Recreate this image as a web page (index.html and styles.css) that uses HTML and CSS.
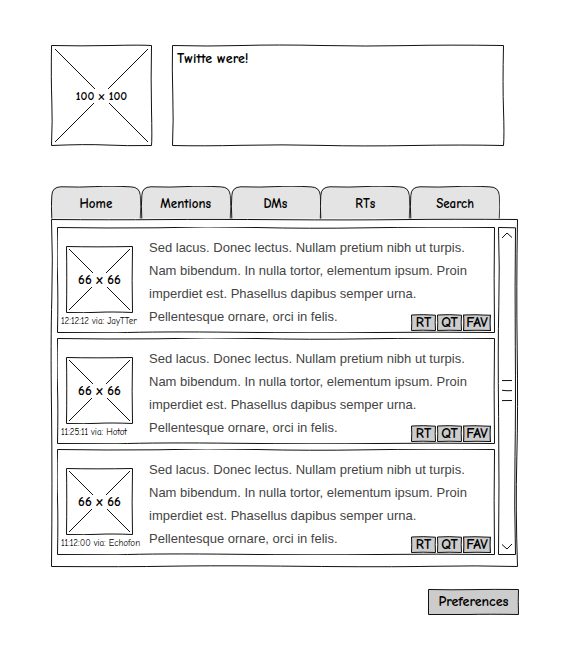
FILE: index.html
```
<!DOCTYPE html>
<html lang="en">
<head>
<meta charset="utf-8">
<meta name="viewport" content="width=device-width, initial-scale=1">
<title>Twitter client</title>
<link rel="stylesheet" href="styles.css">
</head>
<body>
<svg class="defs" aria-hidden="true">
  <symbol id="card" viewBox="0 0 438 106" preserveAspectRatio="none">
    <path d="M.5 .5Q50 1.300 100 .8Q150 -.8 200 .5T310 .8T437.500 .5Q436.800 50 437.500 105.500Q380 104.800 320 105.500T180 105.300T60 105.800L.5 105.500Q1.200 70 .5 50T.5 .5Z"/>
  </symbol>
  <symbol id="photo" viewBox="0 0 67 67" preserveAspectRatio="none">
    <path d="M.5 .5Q30 1.200 66.500 .5Q65.800 35 66.500 66.500Q45 65.600 32 66.300T.5 66.500Q1 30 .5 .5ZM3 3L64 64M64 3L3 64"/>
  </symbol>
  <symbol id="tab" viewBox="0 0 90 34" preserveAspectRatio="none">
    <path d="M.8 33.500Q0 20 .8 10Q1 1 10 .8Q30 1.500 45 .6T80 .9Q89 1 89.600 10Q90.200 22 89.500 33.500"/>
  </symbol>
  <symbol id="key" viewBox="0 0 25 17" preserveAspectRatio="none">
    <path d="M.5 1Q12 .2 24.500 1.200Q23.900 8 24.500 16.500Q12 15.900 .5 16.500Q1 8 .5 1Z"/>
  </symbol>
</svg>
<main class="app">
  <header class="compose">
    <div class="photo photo-large">
      <svg class="frame" viewBox="0 0 101 101" preserveAspectRatio="none" aria-hidden="true"><path d="M.5 .5Q30 1.200 60 .5T100.500 .5Q99.800 35 100.500 65T100.500 100.500Q75 101 55 100T.5 100.500Q1.600 75 .8 55T.5 .5ZM4 4L97 97M97 4L4 97"/></svg>
      <span class="size">100 x 100</span>
    </div>
    <div class="message">
      <textarea aria-label="Message">Twitte were!</textarea>
      <svg class="frame" viewBox="0 0 332 101" preserveAspectRatio="none" aria-hidden="true"><path d="M.5 .5Q35 1.500 70 .5T150 .5T235 .6T331.500 .5Q330.600 40 331.500 65T331.500 100.500Q290 99.600 240 100.500T150 100.400T70 100.300T.5 100.500Q1.600 75 .8 50T.5 .5Z"/></svg>
    </div>
  </header>

  <div class="tabs" role="tablist">
    <button class="tab" role="tab" aria-selected="true"><svg class="frame"><use href="#tab"/></svg><span>Home</span></button>
    <button class="tab" role="tab"><svg class="frame"><use href="#tab"/></svg><span>Mentions</span></button>
    <button class="tab" role="tab"><svg class="frame"><use href="#tab"/></svg><span>DMs</span></button>
    <button class="tab" role="tab"><svg class="frame"><use href="#tab"/></svg><span>RTs</span></button>
    <button class="tab" role="tab"><svg class="frame"><use href="#tab"/></svg><span>Search</span></button>
  </div>

  <section class="panel" role="tabpanel">
    <svg class="frame" viewBox="0 0 467 348" preserveAspectRatio="none" aria-hidden="true"><path d="M.5 .5Q60 1 110 .6T230 .7T350 .6T466.500 .5Q465.300 70 466.200 130T465.800 240T466.500 347.500Q425 346.400 380 347.300T250 347.300T120 347.200T.5 347.500Q1.400 260 .5 190T.8 80T.5 .5Z"/></svg>
    <div class="feed">
      <article class="card">
        <svg class="frame"><use href="#card"/></svg>
        <div class="source">
          <div class="photo"><svg class="frame"><use href="#photo"/></svg><span class="size">66 x 66</span></div>
          <p class="meta">12:12:12 via: JayTTer</p>
        </div>
        <p class="text">Sed lacus. Donec lectus. Nullam pretium nibh ut turpis. Nam bibendum. In nulla tortor, elementum ipsum. Proin imperdiet est. Phasellus dapibus semper urna. Pellentesque ornare, orci in felis.</p>
        <div class="actions">
          <button class="key"><svg class="frame"><use href="#key"/></svg><span>RT</span></button>
          <button class="key"><svg class="frame"><use href="#key"/></svg><span>QT</span></button>
          <button class="key key-wide"><svg class="frame"><use href="#key"/></svg><span>FAV</span></button>
        </div>
      </article>
      <article class="card">
        <svg class="frame"><use href="#card"/></svg>
        <div class="source">
          <div class="photo"><svg class="frame"><use href="#photo"/></svg><span class="size">66 x 66</span></div>
          <p class="meta">11:25:11 via: Hotot</p>
        </div>
        <p class="text">Sed lacus. Donec lectus. Nullam pretium nibh ut turpis. Nam bibendum. In nulla tortor, elementum ipsum. Proin imperdiet est. Phasellus dapibus semper urna. Pellentesque ornare, orci in felis.</p>
        <div class="actions">
          <button class="key"><svg class="frame"><use href="#key"/></svg><span>RT</span></button>
          <button class="key"><svg class="frame"><use href="#key"/></svg><span>QT</span></button>
          <button class="key key-wide"><svg class="frame"><use href="#key"/></svg><span>FAV</span></button>
        </div>
      </article>
      <article class="card">
        <svg class="frame"><use href="#card"/></svg>
        <div class="source">
          <div class="photo"><svg class="frame"><use href="#photo"/></svg><span class="size">66 x 66</span></div>
          <p class="meta">11:12:00 via: Echofon</p>
        </div>
        <p class="text">Sed lacus. Donec lectus. Nullam pretium nibh ut turpis. Nam bibendum. In nulla tortor, elementum ipsum. Proin imperdiet est. Phasellus dapibus semper urna. Pellentesque ornare, orci in felis.</p>
        <div class="actions">
          <button class="key"><svg class="frame"><use href="#key"/></svg><span>RT</span></button>
          <button class="key"><svg class="frame"><use href="#key"/></svg><span>QT</span></button>
          <button class="key key-wide"><svg class="frame"><use href="#key"/></svg><span>FAV</span></button>
        </div>
      </article>
    </div>
    <div class="scroll">
      <svg class="frame" viewBox="0 0 18 329" preserveAspectRatio="none" aria-hidden="true"><path d="M.5 .5L17.500 .8Q16.800 60 17.300 120T17 230T17.500 328.500L.5 328.500Q1.400 260 .6 190T.8 80T.5 .5Z"/></svg>
      <button class="arrow" aria-label="Scroll up"><svg width="12" height="7" viewBox="0 0 12 7"><path d="M1 6L6 1L11 5.500"/></svg></button>
      <svg class="grip" width="12" height="22" viewBox="0 0 12 22" aria-hidden="true"><path d="M1 .6L11 .5M1 10.300Q6 11 11 10.600M1 20.600L11 20.500"/></svg>
      <button class="arrow" aria-label="Scroll down"><svg width="12" height="7" viewBox="0 0 12 7"><path d="M1 1.500L6 6L11 1"/></svg></button>
    </div>
  </section>

  <footer class="footer">
    <button class="prefs"><svg class="frame" viewBox="0 0 91 26" preserveAspectRatio="none" aria-hidden="true"><path d="M.5 .5Q25 1 45 .6T90.500 .5Q90 12 90.500 25.500Q60 25 40 25.500L.5 25.500Z"/></svg><span>Preferences</span></button>
  </footer>
</main>
</body>
</html>
```
FILE: styles.css
```
* { box-sizing: border-box; }

body {
  margin: 0;
  background: #fff;
  color: #000;
  font: bold 13px/16px "Comic Sans MS", "Comic Neue", "Noto Sans", sans-serif;
}

p { margin: 0; }

button {
  position: relative;
  padding: 0;
  border: 0;
  background: none;
  color: inherit;
  font: inherit;
}

svg {
  display: block;
  fill: none;
  stroke: #111;
  stroke-width: 1;
}

.defs {
  position: absolute;
  width: 0;
  height: 0;
}

/* Hand-drawn outline that stretches over its box */
.frame {
  position: absolute;
  inset: 0;
  width: 100%;
  height: 100%;
  overflow: visible;
  pointer-events: none;
}

button span { position: relative; }

.app { padding: 45px 44px 24px 51px; }

.compose {
  display: flex;
  gap: 20px;
  margin-right: 14px;
}

.photo {
  position: relative;
  display: grid;
  place-items: center;
  width: 67px;
  height: 67px;
}

.photo-large {
  flex: none;
  width: 101px;
  height: 101px;
  font-size: 12px;
}

.size {
  position: relative;
  background: #fff;
  line-height: 14px;
  white-space: nowrap;
}

.message {
  position: relative;
  flex: 1;
  display: flex;
}

.message textarea {
  width: 100%;
  padding: 6px 5px;
  border: 0;
  outline: 0;
  resize: none;
  background: none;
  color: inherit;
  font: inherit;
  font-size: 14px;
}

.tabs {
  display: flex;
  margin: 40px 18px 0 0;
}

.tab {
  flex: 1;
  height: 33px;
  padding-top: 2px;
}

.tab .frame { fill: #e4e4e4; }

.panel {
  position: relative;
  display: flex;
  gap: 3px;
  padding: 8px 2px 12px 6px;
}

.feed {
  flex: 1;
  display: grid;
  gap: 5px;
}

.card {
  position: relative;
  display: flex;
  min-height: 106px;
  padding: 0 16px 0 4px;
}

.source {
  flex: none;
  width: 88px;
  padding: 19px 0 0 5px;
}

.meta {
  margin-left: -5px;
  font-size: 9px;
  font-weight: normal;
  white-space: nowrap;
}

.text {
  padding-top: 9px;
  color: #444;
  font: 13px/23px "Liberation Sans", Arial, sans-serif;
}

.actions {
  position: absolute;
  right: 4px;
  bottom: 2px;
  display: flex;
  gap: 1px;
}

.key {
  width: 25px;
  height: 17px;
  font-size: 14px;
}

.key-wide { width: 28px; }

.key .frame,
.prefs .frame { fill: #ccc; }

.scroll {
  position: relative;
  display: flex;
  flex-direction: column;
  justify-content: space-between;
  align-items: center;
  width: 18px;
}

.arrow { padding: 5px 2px; }

.footer {
  display: flex;
  justify-content: flex-end;
  margin: 22px -1px 0 0;
}

.prefs {
  width: 91px;
  height: 26px;
  font-size: 14px;
}
```
